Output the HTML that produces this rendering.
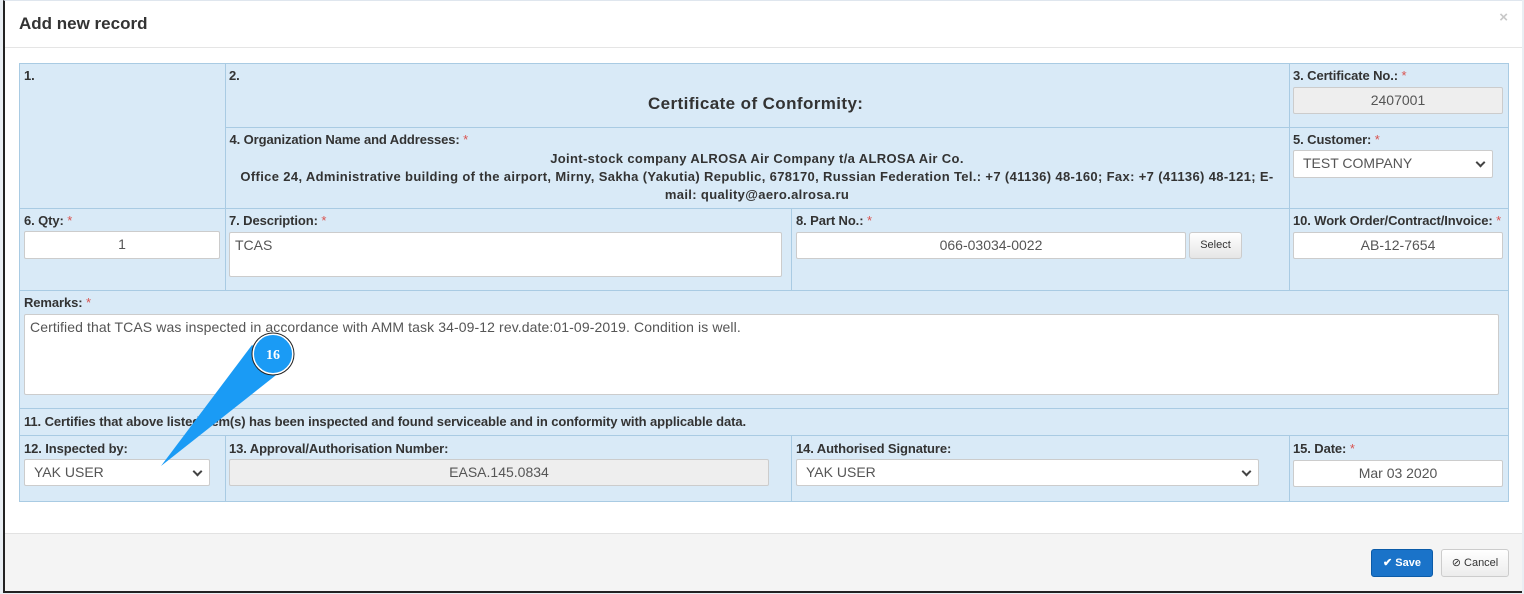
<!DOCTYPE html>
<html><head><meta charset="utf-8"><style>
*{box-sizing:border-box;margin:0;padding:0}
body{width:1524px;height:594px;background:#e9eef3;position:relative;overflow:hidden;font-family:"Liberation Sans",Arial,sans-serif;color:#333}
.modal{position:absolute;left:3px;top:0;width:1519px;height:593px;background:#fff;border-left:2px solid #222;border-bottom:3px solid #222;border-top:1px solid #dfe6ee}
.hdr{position:absolute;left:0;top:0;right:0;height:47px;border-bottom:1px solid #e5e5e5}
.hdr h3{position:absolute;left:14px;top:13px;font-size:17px;font-weight:bold;color:#333}
.x{position:absolute;right:14px;top:8px;color:#c8c8c8;font-size:15px;font-weight:bold}
.c{position:absolute;background:#d9eaf7;border:1px solid #a9cbe3}
.l{position:absolute;font-size:13px;font-weight:bold;color:#333;letter-spacing:-0.1px;white-space:nowrap}
.l i{color:#d9534f;font-style:normal;font-weight:normal}
.in{position:absolute;background:#fff;border:1px solid #ccc;border-radius:2px;font-size:14px;color:#555;text-align:center;line-height:25px;white-space:nowrap}
.dis{background:#eee}
.sel{text-align:left;padding-left:9px}
.sel:after{content:"";position:absolute;right:8px;top:8px;width:5px;height:5px;border-right:2px solid #444;border-bottom:2px solid #444;transform:rotate(45deg)}
.ta{text-align:left;padding:4px 5px;line-height:16px}
</style></head><body>
<div class="modal">
<div class="hdr"><h3>Add new record</h3><span class="x">×</span></div>
</div>
<div class="c" style="left:19px;top:63px;width:207px;height:146px"></div>
<div class="c" style="left:225px;top:63px;width:1065px;height:65px"></div>
<div class="c" style="left:1289px;top:63px;width:220px;height:65px"></div>
<div class="c" style="left:225px;top:127px;width:1065px;height:82px"></div>
<div class="c" style="left:1289px;top:127px;width:220px;height:82px"></div>
<div class="c" style="left:19px;top:208px;width:207px;height:83px"></div>
<div class="c" style="left:225px;top:208px;width:567px;height:83px"></div>
<div class="c" style="left:791px;top:208px;width:499px;height:83px"></div>
<div class="c" style="left:1289px;top:208px;width:220px;height:83px"></div>
<div class="c" style="left:19px;top:290px;width:1490px;height:119px"></div>
<div class="c" style="left:19px;top:408px;width:1490px;height:28px"></div>
<div class="c" style="left:19px;top:435px;width:207px;height:67px"></div>
<div class="c" style="left:225px;top:435px;width:567px;height:67px"></div>
<div class="c" style="left:791px;top:435px;width:499px;height:67px"></div>
<div class="c" style="left:1289px;top:435px;width:220px;height:67px"></div>

<div class="l" style="left:24px;top:68px">1.</div>
<div class="l" style="left:229px;top:68px">2.</div>
<div class="l" style="left:648px;top:94px;font-size:17px;letter-spacing:0.4px">Certificate of Conformity:</div>
<div class="l" style="left:1293px;top:68px">3. Certificate No.: <i>*</i></div>
<div class="in dis" style="left:1293px;top:87px;width:210px;height:27px">2407001</div>

<div class="l" style="left:226px;top:132px">&nbsp;4. Organization Name and Addresses: <i>*</i></div>
<div class="l" style="left:226px;top:150px;width:1062px;text-align:center;line-height:18px;white-space:normal;letter-spacing:0.35px">Joint-stock company ALROSA Air Company t/a ALROSA Air Co.<br>Office 24, Administrative building of the airport, Mirny, Sakha (Yakutia) Republic, 678170, Russian Federation Tel.: +7 (41136) 48-160; Fax: +7 (41136) 48-121; E-<br>mail: quality@aero.alrosa.ru</div>
<div class="l" style="left:1293px;top:132px">5. Customer: <i>*</i></div>
<div class="in sel" style="left:1293px;top:150px;width:200px;height:28px">TEST COMPANY</div>

<div class="l" style="left:24px;top:213px">6. Qty: <i>*</i></div>
<div class="in" style="left:24px;top:231px;width:196px;height:28px">1</div>
<div class="l" style="left:229px;top:213px">7. Description: <i>*</i></div>
<div class="in ta" style="left:229px;top:232px;width:553px;height:45px">TCAS</div>
<div class="l" style="left:796px;top:213px">8. Part No.: <i>*</i></div>
<div class="in" style="left:796px;top:232px;width:390px;height:27px">066-03034-0022</div>
<div class="in" style="left:1189px;top:232px;width:53px;height:27px;font-size:11px;background:linear-gradient(#fff,#e6e6e6);color:#333;border-radius:3px">Select</div>
<div class="l" style="left:1293px;top:213px">10. Work Order/Contract/Invoice: <i>*</i></div>
<div class="in" style="left:1293px;top:232px;width:210px;height:27px">AB-12-7654</div>

<div class="l" style="left:24px;top:295px">Remarks: <i>*</i></div>
<div class="in ta" style="left:24px;top:314px;width:1475px;height:81px;letter-spacing:0.1px">Certified that TCAS was inspected in accordance with AMM task 34-09-12 rev.date:01-09-2019. Condition is well.</div>

<div class="l" style="left:24px;top:414px">11. Certifies that above listed item(s) has been inspected and found serviceable and in conformity with applicable data.</div>

<div class="l" style="left:24px;top:441px">12. Inspected by:</div>
<div class="in sel" style="left:24px;top:459px;width:186px;height:27px">YAK USER</div>
<div class="l" style="left:229px;top:441px">13. Approval/Authorisation Number:</div>
<div class="in dis" style="left:229px;top:459px;width:540px;height:27px">EASA.145.0834</div>
<div class="l" style="left:796px;top:441px">14. Authorised Signature:</div>
<div class="in sel" style="left:796px;top:459px;width:463px;height:27px">YAK USER</div>
<div class="l" style="left:1293px;top:441px">15. Date: <i>*</i></div>
<div class="in" style="left:1293px;top:460px;width:210px;height:27px">Mar 03 2020</div>

<div style="position:absolute;left:5px;right:2px;top:533px;height:58px;background:#f4f4f4;border-top:1px solid #e2e2e2"></div>
<div style="position:absolute;left:1371px;top:549px;width:62px;height:28px;background:#1a73c9;border:1px solid #0b5ba8;border-radius:3px;color:#fff;font-size:11px;font-weight:bold;line-height:26px;text-align:center">✔ Save</div>
<div style="position:absolute;left:1441px;top:549px;width:68px;height:28px;background:linear-gradient(#fff,#ececec);border:1px solid #ccc;border-radius:3px;color:#333;font-size:11px;line-height:26px;text-align:center">⊘ Cancel</div>

<svg style="position:absolute;left:0;top:0" width="1524" height="594">
<polygon points="161,466 252,345 285,368" fill="#1a9bf5"/>
<circle cx="273" cy="354" r="20" fill="#1a9bf5" stroke="#fff" stroke-width="2"/>
<circle cx="273" cy="354" r="21" fill="none" stroke="#222" stroke-width="1"/>
<text x="273" y="359" font-family="Liberation Serif,serif" font-weight="bold" font-size="14" fill="#fff" text-anchor="middle">16</text>
</svg>
</body></html>
